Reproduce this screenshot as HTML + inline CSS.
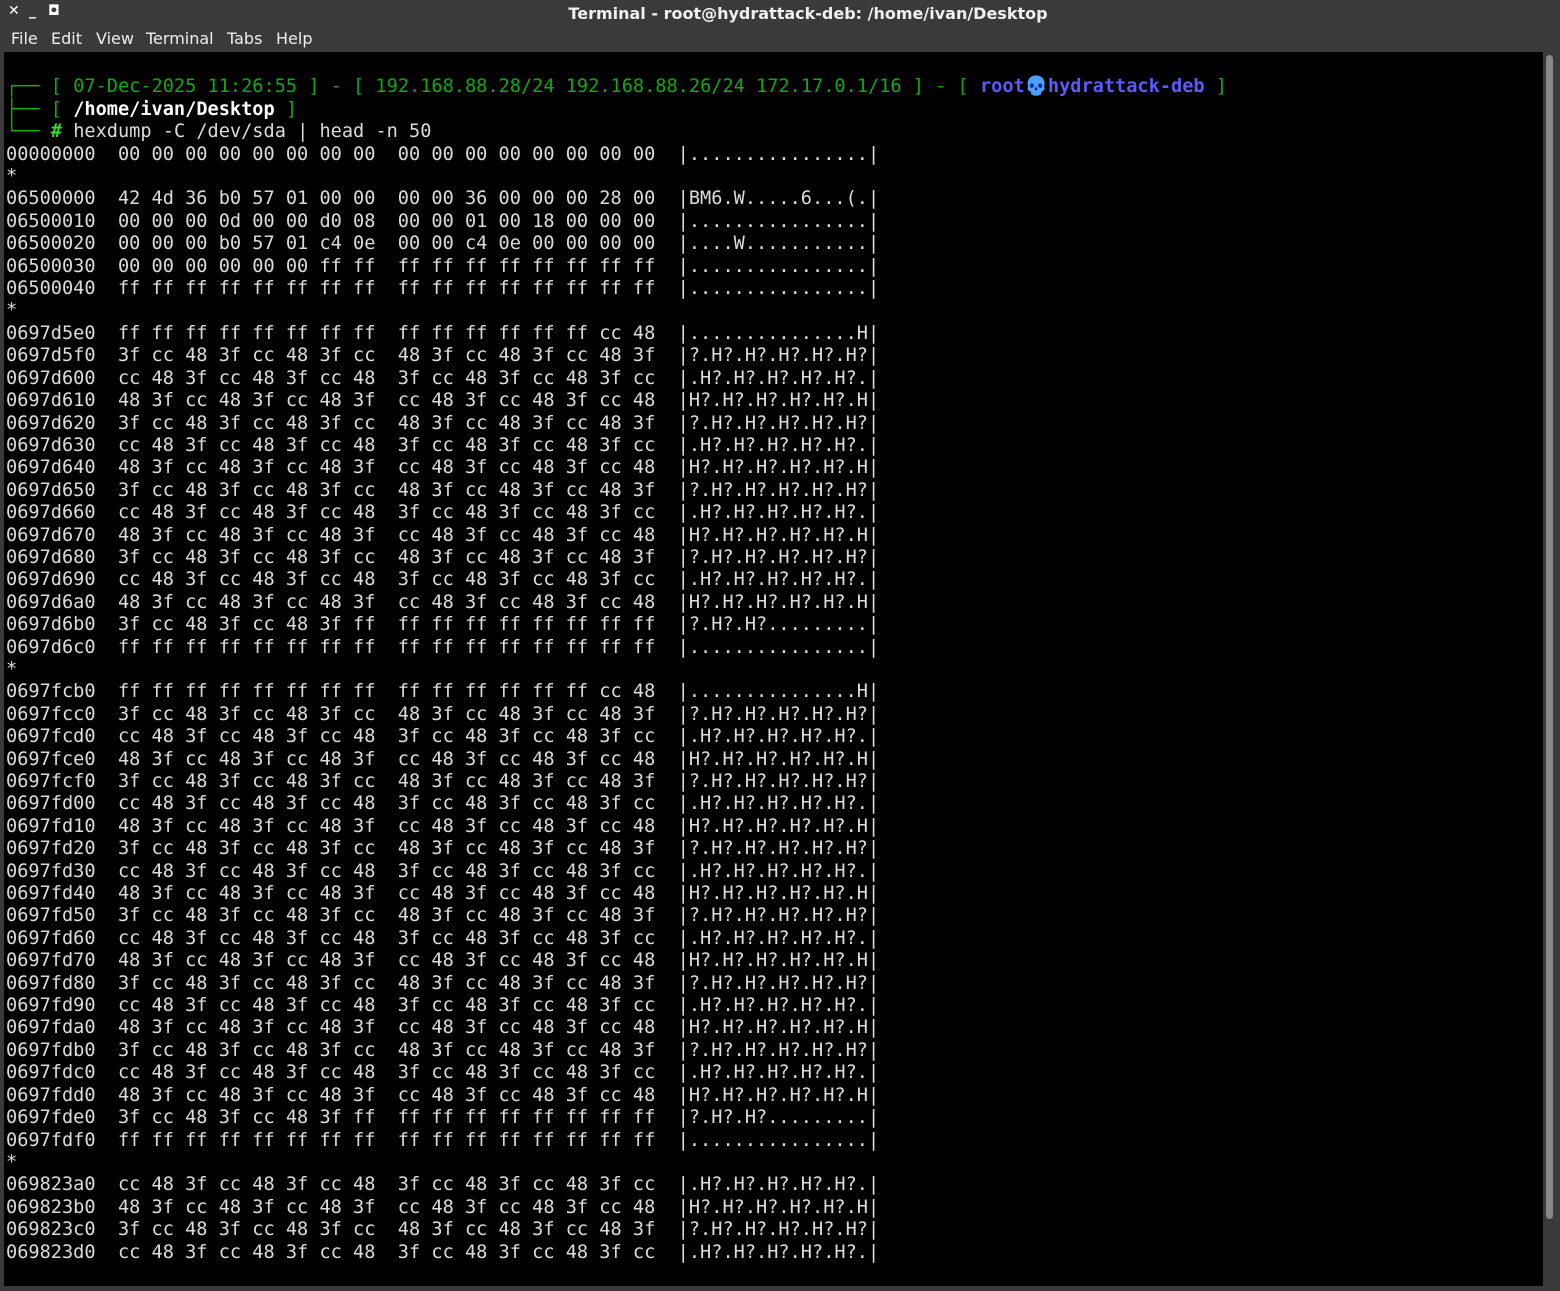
<!DOCTYPE html>
<html><head><meta charset="utf-8"><style>
html,body{margin:0;padding:0;width:1560px;height:1291px;overflow:hidden;background:#3a3a3a;}
#title{position:absolute;left:0;top:0;width:1560px;height:26px;background:#3a3a3a;color:#f0f0f0;font:bold 16px "DejaVu Sans","Liberation Sans",sans-serif;}
#title .t{position:absolute;left:0;width:1616px;text-align:center;top:4px;}
#title .b{position:absolute;top:3px;font-size:14px;color:#fff;}
#menu{position:absolute;left:0;top:26px;height:26px;width:1560px;background:#3a3a3a;color:#eee;font:16px "DejaVu Sans","Liberation Sans",sans-serif;}
#menu span{position:absolute;top:3px;}
#term{position:absolute;left:4px;top:52px;width:1539px;height:1234px;background:#000;overflow:hidden;}
#sb{position:absolute;left:1543px;top:52px;width:13px;height:1234px;background:#3a3a3a;}
#th{position:absolute;left:1546px;top:55px;width:7px;height:1164px;background:#888;border-radius:4px;}
pre{margin:0;position:absolute;left:2px;top:2px;font:18.6px "DejaVu Sans Mono","Liberation Mono",monospace;line-height:22.4px;color:#dcdcdc;}
.g{color:#12a812}.gb{color:#33dd33;font-weight:bold}.w{color:#fff;font-weight:bold}.bl{color:#5a5aff;font-weight:bold}
</style></head><body>
<div id="title"><span class="b" style="left:8px">✕</span><span class="b" style="left:29px">_</span><span class="b" style="left:48px">◘</span><div class="t">Terminal - root@hydrattack-deb: /home/ivan/Desktop</div></div>
<div id="menu"><span style="left:11px">File</span><span style="left:51px">Edit</span><span style="left:96px">View</span><span style="left:146px">Terminal</span><span style="left:227px">Tabs</span><span style="left:276px">Help</span></div>
<div id="term"><pre>

<span class="g">┌──</span> <span class="g">[ 07-Dec-2025 11:26:55 ] - [ 192.168.88.28/24 192.168.88.26/24 172.17.0.1/16 ] - [ </span><span class="bl">root<span style="filter:grayscale(1) brightness(.6) sepia(1) hue-rotate(190deg) saturate(8)">💀</span>hydrattack-deb</span><span class="g"> ]</span>
<span class="g">├──</span> <span class="g">[ </span><span class="w">/home/ivan/Desktop</span><span class="g"> ]</span>
<span class="g">└──</span> <span class="gb">#</span> hexdump -C /dev/sda | head -n 50
00000000  00 00 00 00 00 00 00 00  00 00 00 00 00 00 00 00  |................|
*
06500000  42 4d 36 b0 57 01 00 00  00 00 36 00 00 00 28 00  |BM6.W.....6...(.|
06500010  00 00 00 0d 00 00 d0 08  00 00 01 00 18 00 00 00  |................|
06500020  00 00 00 b0 57 01 c4 0e  00 00 c4 0e 00 00 00 00  |....W...........|
06500030  00 00 00 00 00 00 ff ff  ff ff ff ff ff ff ff ff  |................|
06500040  ff ff ff ff ff ff ff ff  ff ff ff ff ff ff ff ff  |................|
*
0697d5e0  ff ff ff ff ff ff ff ff  ff ff ff ff ff ff cc 48  |...............H|
0697d5f0  3f cc 48 3f cc 48 3f cc  48 3f cc 48 3f cc 48 3f  |?.H?.H?.H?.H?.H?|
0697d600  cc 48 3f cc 48 3f cc 48  3f cc 48 3f cc 48 3f cc  |.H?.H?.H?.H?.H?.|
0697d610  48 3f cc 48 3f cc 48 3f  cc 48 3f cc 48 3f cc 48  |H?.H?.H?.H?.H?.H|
0697d620  3f cc 48 3f cc 48 3f cc  48 3f cc 48 3f cc 48 3f  |?.H?.H?.H?.H?.H?|
0697d630  cc 48 3f cc 48 3f cc 48  3f cc 48 3f cc 48 3f cc  |.H?.H?.H?.H?.H?.|
0697d640  48 3f cc 48 3f cc 48 3f  cc 48 3f cc 48 3f cc 48  |H?.H?.H?.H?.H?.H|
0697d650  3f cc 48 3f cc 48 3f cc  48 3f cc 48 3f cc 48 3f  |?.H?.H?.H?.H?.H?|
0697d660  cc 48 3f cc 48 3f cc 48  3f cc 48 3f cc 48 3f cc  |.H?.H?.H?.H?.H?.|
0697d670  48 3f cc 48 3f cc 48 3f  cc 48 3f cc 48 3f cc 48  |H?.H?.H?.H?.H?.H|
0697d680  3f cc 48 3f cc 48 3f cc  48 3f cc 48 3f cc 48 3f  |?.H?.H?.H?.H?.H?|
0697d690  cc 48 3f cc 48 3f cc 48  3f cc 48 3f cc 48 3f cc  |.H?.H?.H?.H?.H?.|
0697d6a0  48 3f cc 48 3f cc 48 3f  cc 48 3f cc 48 3f cc 48  |H?.H?.H?.H?.H?.H|
0697d6b0  3f cc 48 3f cc 48 3f ff  ff ff ff ff ff ff ff ff  |?.H?.H?.........|
0697d6c0  ff ff ff ff ff ff ff ff  ff ff ff ff ff ff ff ff  |................|
*
0697fcb0  ff ff ff ff ff ff ff ff  ff ff ff ff ff ff cc 48  |...............H|
0697fcc0  3f cc 48 3f cc 48 3f cc  48 3f cc 48 3f cc 48 3f  |?.H?.H?.H?.H?.H?|
0697fcd0  cc 48 3f cc 48 3f cc 48  3f cc 48 3f cc 48 3f cc  |.H?.H?.H?.H?.H?.|
0697fce0  48 3f cc 48 3f cc 48 3f  cc 48 3f cc 48 3f cc 48  |H?.H?.H?.H?.H?.H|
0697fcf0  3f cc 48 3f cc 48 3f cc  48 3f cc 48 3f cc 48 3f  |?.H?.H?.H?.H?.H?|
0697fd00  cc 48 3f cc 48 3f cc 48  3f cc 48 3f cc 48 3f cc  |.H?.H?.H?.H?.H?.|
0697fd10  48 3f cc 48 3f cc 48 3f  cc 48 3f cc 48 3f cc 48  |H?.H?.H?.H?.H?.H|
0697fd20  3f cc 48 3f cc 48 3f cc  48 3f cc 48 3f cc 48 3f  |?.H?.H?.H?.H?.H?|
0697fd30  cc 48 3f cc 48 3f cc 48  3f cc 48 3f cc 48 3f cc  |.H?.H?.H?.H?.H?.|
0697fd40  48 3f cc 48 3f cc 48 3f  cc 48 3f cc 48 3f cc 48  |H?.H?.H?.H?.H?.H|
0697fd50  3f cc 48 3f cc 48 3f cc  48 3f cc 48 3f cc 48 3f  |?.H?.H?.H?.H?.H?|
0697fd60  cc 48 3f cc 48 3f cc 48  3f cc 48 3f cc 48 3f cc  |.H?.H?.H?.H?.H?.|
0697fd70  48 3f cc 48 3f cc 48 3f  cc 48 3f cc 48 3f cc 48  |H?.H?.H?.H?.H?.H|
0697fd80  3f cc 48 3f cc 48 3f cc  48 3f cc 48 3f cc 48 3f  |?.H?.H?.H?.H?.H?|
0697fd90  cc 48 3f cc 48 3f cc 48  3f cc 48 3f cc 48 3f cc  |.H?.H?.H?.H?.H?.|
0697fda0  48 3f cc 48 3f cc 48 3f  cc 48 3f cc 48 3f cc 48  |H?.H?.H?.H?.H?.H|
0697fdb0  3f cc 48 3f cc 48 3f cc  48 3f cc 48 3f cc 48 3f  |?.H?.H?.H?.H?.H?|
0697fdc0  cc 48 3f cc 48 3f cc 48  3f cc 48 3f cc 48 3f cc  |.H?.H?.H?.H?.H?.|
0697fdd0  48 3f cc 48 3f cc 48 3f  cc 48 3f cc 48 3f cc 48  |H?.H?.H?.H?.H?.H|
0697fde0  3f cc 48 3f cc 48 3f ff  ff ff ff ff ff ff ff ff  |?.H?.H?.........|
0697fdf0  ff ff ff ff ff ff ff ff  ff ff ff ff ff ff ff ff  |................|
*
069823a0  cc 48 3f cc 48 3f cc 48  3f cc 48 3f cc 48 3f cc  |.H?.H?.H?.H?.H?.|
069823b0  48 3f cc 48 3f cc 48 3f  cc 48 3f cc 48 3f cc 48  |H?.H?.H?.H?.H?.H|
069823c0  3f cc 48 3f cc 48 3f cc  48 3f cc 48 3f cc 48 3f  |?.H?.H?.H?.H?.H?|
069823d0  cc 48 3f cc 48 3f cc 48  3f cc 48 3f cc 48 3f cc  |.H?.H?.H?.H?.H?.|
</pre></div>
<div id="sb"></div><div id="th"></div>
</body></html>
